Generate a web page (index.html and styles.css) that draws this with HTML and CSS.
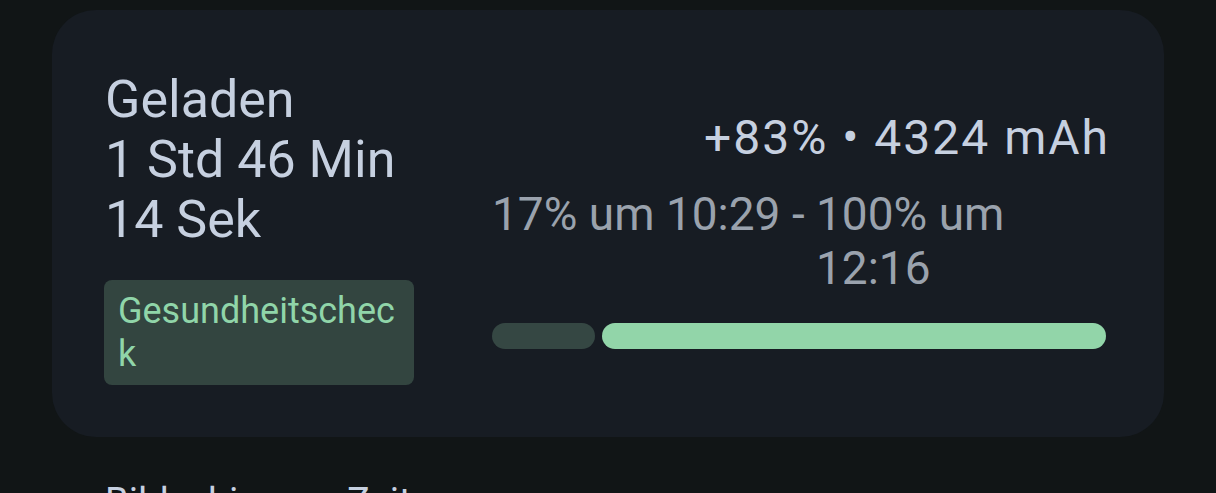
FILE: index.html
```html
<!DOCTYPE html>
<html>
<head>
    <title>Akku</title>
    <meta name="viewport" content="width=device-width, initial-scale=1.0">
    <link rel="stylesheet" href="styles.css">
</head>
<body>
    <div class="charge-card">
        <div class="charge-info">
            <div class="charge-duration">
                <div>Geladen</div>
                <div>1 Std 46 Min 14 Sek</div>
            </div>
            <div class="health-badge">Gesundheitscheck</div>
        </div>

        <div class="charge-stats">
            <div class="charge-amount">+83% • 4324 mAh</div>
            <div class="charge-range">
                <span class="range-start">17% um 10:29 -&nbsp;</span>
                <span class="range-end">100% um 12:16</span>
            </div>
            <div class="charge-bar">
                <div class="bar-before"></div>
                <div class="bar-charged"></div>
            </div>
        </div>
    </div>

    <div class="section-title">Bildschirm-an-Zeit</div>
</body>
</html>
```

FILE: styles.css
```css
body {
    margin: 0;
    height: 100vh;
    overflow: hidden;
    background: #111516;
    font-family: Roboto, 'Noto Sans', sans-serif;
}

.charge-card {
    box-sizing: border-box;
    width: 1112px;
    height: 427px;
    margin: 10px 0 0 52px;
    padding: 60px 54px 0 52px;
    background: #171c23;
    border-radius: 44px;
    display: flex;
    align-items: flex-start;
    gap: 78px;
}

.charge-info {
    width: 310px;
    flex-shrink: 0;
}

.charge-duration {
    font-size: 52px;
    line-height: 60px;
    color: #c6d0e0;
    padding-left: 1px;
}

.health-badge {
    margin-top: 30px;
    padding: 10px 14px 9px;
    background: #334540;
    border-radius: 8px;
    color: #90d5a9;
    font-size: 36px;
    line-height: 43px;
    overflow-wrap: anywhere;
}

.charge-stats {
    flex: 1;
    margin-top: 41px;
}

.charge-amount {
    text-align: right;
    font-size: 48px;
    letter-spacing: 2px;
    line-height: 54px;
    color: #c6d0e0;
}

.charge-range {
    display: flex;
    margin-top: 22px;
    font-size: 46px;
    line-height: 54px;
    color: #9aa2ad;
}

.range-start {
    white-space: nowrap;
    flex-shrink: 0;
}

.charge-bar {
    display: flex;
    gap: 7px;
    height: 26px;
    margin: 28px 4px 0 0;
}

.bar-before {
    width: 103px;
    background: #354743;
    border-radius: 13px;
}

.bar-charged {
    flex: 1;
    background: #92d5a9;
    border-radius: 13px;
}

.section-title {
    margin: 43px 0 0 105px;
    font-size: 38px;
    color: #c6d0e0;
}
```
